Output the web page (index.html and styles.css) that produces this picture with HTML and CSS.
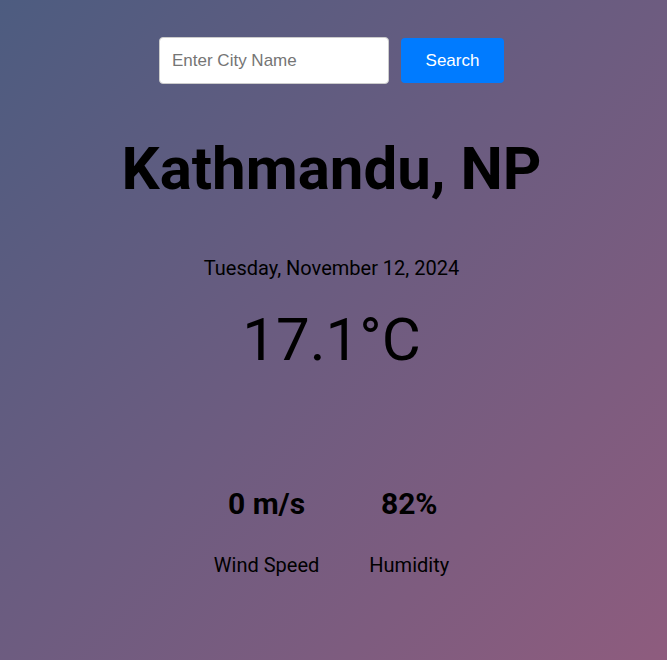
FILE: index.html
```html
<!DOCTYPE html>
<html lang="en">
<head>
<meta charset="utf-8">
<title>Weather</title>
<link rel="stylesheet" href="styles.css">
</head>
<body>
<main class="app">
  <form class="search">
    <input class="search-input" type="text" placeholder="Enter City Name">
    <button class="search-btn" type="button">Search</button>
  </form>
  <h1 class="city">Kathmandu, NP</h1>
  <p class="date">Tuesday, November 12, 2024</p>
  <p class="temp">17.1°C</p>
  <section class="stats">
    <div class="stat">
      <h2 class="stat-value">0 m/s</h2>
      <p class="stat-label">Wind Speed</p>
    </div>
    <div class="stat">
      <h2 class="stat-value">82%</h2>
      <p class="stat-label">Humidity</p>
    </div>
  </section>
</main>
</body>
</html>
```
FILE: styles.css
```css
html, body {
  margin: 0;
  height: 100%;
}
body {
  background: linear-gradient(135deg, #4d5c80 0%, #6d5c80 50%, #8e5c7e 100%);
  font-family: Roboto, "Liberation Sans", sans-serif;
  color: #000;
}
.app {
  display: flex;
  flex-direction: column;
  align-items: center;
  padding: 37px 4px 0 0;
}
.search {
  display: flex;
  align-items: center;
  gap: 12px;
}
.search-input {
  box-sizing: border-box;
  width: 230px;
  height: 47px;
  padding: 0 12px;
  border: 1px solid #ccc;
  border-radius: 4px;
  background: #fff;
  font-family: "Liberation Sans", Arial, sans-serif;
  font-size: 17px;
  outline: none;
}
.search-input::placeholder {
  color: #757575;
}
.search-btn {
  box-sizing: border-box;
  width: 103px;
  height: 45px;
  border: none;
  border-radius: 4px;
  background: #007bff;
  color: #fff;
  font-family: "Liberation Sans", Arial, sans-serif;
  font-size: 17px;
}
.city {
  margin: 50px 0 0;
  font-size: 60px;
  font-weight: 700;
  line-height: 70px;
}
.date {
  margin: 52px 0 0;
  font-size: 20px;
  line-height: 24px;
}
.temp {
  margin: 25px 0 0;
  font-size: 60px;
  line-height: 70px;
}
.stats {
  display: flex;
  gap: 50px;
  margin-top: 111px;
}
.stat {
  display: flex;
  flex-direction: column;
  align-items: center;
}
.stat-value {
  margin: 0;
  font-size: 30px;
  font-weight: 700;
  line-height: 36px;
}
.stat-label {
  margin: 31px 0 0;
  font-size: 20px;
  line-height: 24px;
}
```
